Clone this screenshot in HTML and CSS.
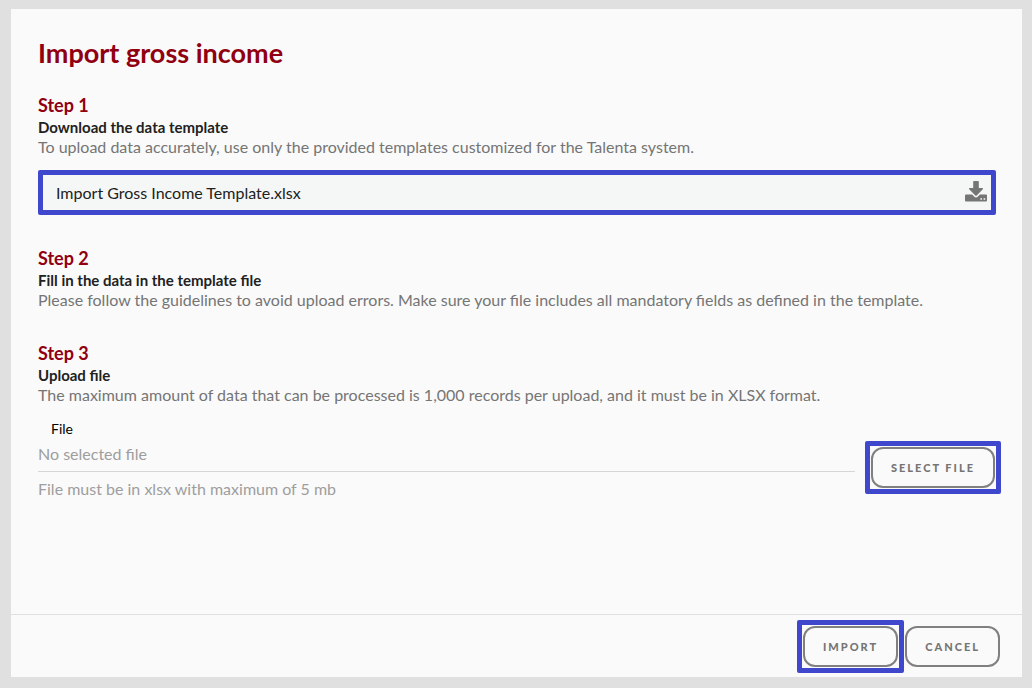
FILE: index.html
```html
<!DOCTYPE html>
<html lang="en">
<head>
    <meta charset="UTF-8">
    <meta name="viewport" content="width=device-width, initial-scale=1.0">
    <title>Import gross income</title>
    <link rel="stylesheet" href="styles.css">
</head>
<body>
    <form class="modal">
        <div class="modal-body">
            <h1>Import gross income</h1>

            <section class="step">
                <h2>Step 1</h2>
                <h3>Download the data template</h3>
                <p>To upload data accurately, use only the provided templates customized for the Talenta system.</p>
                <a class="template" href="#">
                    <span>Import Gross Income Template.xlsx</span>
                    <svg class="download-icon" viewBox="0 0 22 21" aria-hidden="true">
                        <path d="M9 0h4a.8.8 0 0 1 .8.8V7h3.400c.8 0 1.100.8.600 1.300l-6.100 6.100a1 1 0 0 1-1.400 0L4.200 8.300C3.700 7.800 4 7 4.800 7h3.400V.8A.8.8 0 0 1 9 0z"/>
                        <path fill-rule="evenodd" d="M1 13.500h6.100l2 2a2.700 2.700 0 0 0 3.800 0l2-2H21a1 1 0 0 1 1 1v5a1 1 0 0 1-1 1H1a1 1 0 0 1-1-1v-5a1 1 0 0 1 1-1zM15.400 17.200v1.500h1.600v-1.500zM18.600 17.200v1.500h1.600v-1.500z"/>
                    </svg>
                </a>
            </section>

            <section class="step">
                <h2>Step 2</h2>
                <h3>Fill in the data in the template file</h3>
                <p>Please follow the guidelines to avoid upload errors. Make sure your file includes all mandatory fields as defined in the template.</p>
            </section>

            <section class="step">
                <h2>Step 3</h2>
                <h3>Upload file</h3>
                <p>The maximum amount of data that can be processed is 1,000 records per upload, and it must be in XLSX format.</p>
                <div class="upload">
                    <div class="field">
                        <label for="file">File</label>
                        <input type="text" id="file" placeholder="No selected file" readonly>
                        <small>File must be in xlsx with maximum of 5 mb</small>
                    </div>
                    <div class="highlight">
                        <button type="button">Select file</button>
                    </div>
                </div>
            </section>
        </div>

        <div class="modal-footer">
            <div class="highlight">
                <button type="submit">Import</button>
            </div>
            <button type="button">Cancel</button>
        </div>
    </form>
</body>
</html>
```

FILE: styles.css
```css
* {
    box-sizing: border-box;
}

body {
    margin: 0;
    padding: 9px 10px 11px 11px;
    min-height: 100vh;
    display: flex;
    background: #e0e0e0;
    font-family: Lato, sans-serif;
    font-size: 16px;
    line-height: 20px;
}

.modal {
    flex: 1;
    display: flex;
    flex-direction: column;
    background: #fafafa;
}

.modal-body {
    flex: 1;
    padding: 28px 21px 24px 27px;
}

h1, h2, h3, p {
    margin: 0;
}

h1 {
    margin-bottom: 25px;
    font-size: 27px;
    font-weight: 700;
    line-height: 32px;
    color: #900010;
}

h2 {
    margin-bottom: 1px;
    font-size: 18px;
    font-weight: 700;
    line-height: 22px;
    color: #900010;
}

h3 {
    font-size: 15px;
    font-weight: 700;
    line-height: 20px;
    color: #212121;
}

p {
    color: #757575;
}

.step {
    margin-bottom: 32px;
}

.template {
    display: flex;
    justify-content: space-between;
    align-items: center;
    height: 45px;
    margin: 13px 5px 0 0;
    padding: 0 4px 0 13px;
    border: 5px solid #3f48cc;
    border-radius: 2px;
    background: #f5f7f7;
    color: #212121;
    text-decoration: none;
}

.download-icon {
    width: 22px;
    height: 21px;
    margin-bottom: 3px;
    fill: #757575;
}

.upload {
    display: flex;
    align-items: flex-end;
    gap: 10px;
    margin-top: 14px;
}

.upload .highlight {
    margin-bottom: 5px;
}

.field {
    flex: 1;
    display: flex;
    flex-direction: column;
}

.field label {
    padding-left: 13px;
    font-size: 14px;
    color: #000;
}

.field input {
    height: 33px;
    padding: 0 0 4px;
    border: 0;
    border-bottom: 1px solid #d6d6d6;
    background: none;
    font: inherit;
    color: #616161;
    outline: none;
}

.field input::placeholder {
    color: #9e9e9e;
}

.field small {
    margin-top: 7px;
    font-size: 16px;
    color: #9e9e9e;
}

.highlight {
    padding: 1px;
    border: 5px solid #3f48cc;
    border-radius: 2px;
}

button {
    display: block;
    height: 41px;
    padding: 0 18px 1px;
    border: 2px solid #808080;
    border-radius: 12px;
    background: none;
    font-family: inherit;
    font-size: 11px;
    font-weight: 900;
    letter-spacing: 2px;
    text-transform: uppercase;
    color: #757575;
    cursor: pointer;
}

button:hover {
    background: #eee;
}

.modal-footer {
    display: flex;
    justify-content: flex-end;
    align-items: center;
    gap: 1px;
    padding: 5px 22px 4px;
    border-top: 1px solid #e0e0e0;
}
```
